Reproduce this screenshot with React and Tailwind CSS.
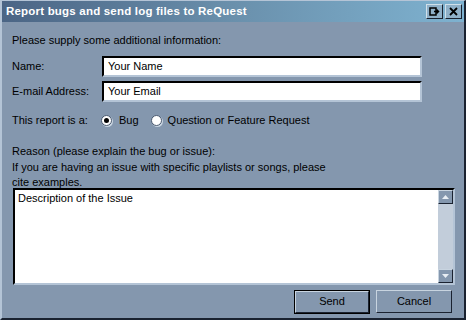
export default function App() {
  const font = { fontFamily: '"Liberation Sans", Arial, sans-serif' }

  return (
    <div className="w-[466px] h-[320px] bg-[#8497ae] flex flex-col border-l-2 border-t border-l-[#b4c4d6] border-t-[#b4c4d6] border-r-2 border-b-2 border-r-[#1a2230] border-b-[#1a2230] overflow-hidden" style={font}>
      {/* Title bar */}
      <div className="h-[21px] shrink-0 flex items-center pl-[4px] pr-[2px] bg-gradient-to-r from-[#4b6585] via-[#6a90ac] to-[#7eb2d0]">
        <span className="text-white font-bold text-[11.5px] tracking-[0.2px] flex-1 leading-none">
          Report bugs and send log files to ReQuest
        </span>
        <button className="w-[17px] h-[15px] mr-[2px] bg-[#8fb0c8] border border-t-[#d0e0ea] border-l-[#d0e0ea] border-r-[#1a2230] border-b-[#1a2230] flex items-center justify-center">
          <svg width="11" height="9" viewBox="0 0 11 9">
            <rect x="1" y="1" width="6" height="7" fill="none" stroke="#000" strokeWidth="1.5" />
            <path d="M5 4.5h4M7.5 2.5l2 2-2 2" fill="none" stroke="#000" strokeWidth="1.5" />
          </svg>
        </button>
        <button className="w-[17px] h-[15px] bg-[#8fb0c8] border border-t-[#d0e0ea] border-l-[#d0e0ea] border-r-[#1a2230] border-b-[#1a2230] flex items-center justify-center">
          <svg width="9" height="9" viewBox="0 0 9 9">
            <path d="M1 1l7 7M8 1l-7 7" stroke="#000" strokeWidth="1.8" />
          </svg>
        </button>
      </div>

      {/* Body */}
      <div className="flex-1 flex flex-col pl-[10px] pr-[8px] pt-[11px] text-[11px] text-black leading-[15px]">
        <p>Please supply some additional information:</p>

        <div className="flex items-center mt-[8px]">
          <span className="w-[90px]">Name:</span>
          <div className="w-[320px] h-[21px] bg-white border-2 border-t-black border-l-black border-r-[#b4c4d6] border-b-[#b4c4d6] flex items-center px-[4px]">
            Your Name
          </div>
        </div>

        <div className="flex items-center mt-[4px]">
          <span className="w-[90px]">E-mail Address:</span>
          <div className="w-[320px] h-[21px] bg-white border-2 border-t-black border-l-black border-r-[#b4c4d6] border-b-[#b4c4d6] flex items-center px-[4px]">
            Your Email
          </div>
        </div>

        <div className="flex items-center mt-[11px]">
          <span className="w-[89px]">This report is a:</span>
          <span className="w-[11px] h-[11px] rounded-full bg-white border border-[#4a5a70] shadow-[1px_1px_0_#c8d4e0] flex items-center justify-center">
            <span className="w-[5px] h-[5px] rounded-full bg-black" />
          </span>
          <span className="ml-[7px]">Bug</span>
          <span className="ml-[12px] w-[11px] h-[11px] rounded-full bg-white border border-[#4a5a70] shadow-[1px_1px_0_#c8d4e0]" />
          <span className="ml-[6px]">Question or Feature Request</span>
        </div>

        <div className="mt-[16px] leading-[15.5px]">
          <p>Reason (please explain the bug or issue):</p>
          <p>If you are having an issue with specific playlists or songs, please</p>
          <p>cite examples.</p>
        </div>

        <div className="-mt-[3px] ml-[1px] w-[442px] h-[97px] shrink-0 bg-white border-2 border-t-black border-l-black border-r-[#b4c4d6] border-b-[#b4c4d6] flex">
          <div className="flex-1 px-[3px] pt-[1px]">Description of the Issue</div>
          <div className="w-[15px] bg-[#c2cdda] flex flex-col justify-between">
            <div className="h-[14px] bg-[#8497ae] border border-t-[#c8d4e0] border-l-[#c8d4e0] border-r-[#1a2230] border-b-[#1a2230] flex items-center justify-center">
              <svg width="7" height="4" viewBox="0 0 7 4"><path d="M3.5 0L7 4H0z" fill="#e8eef4" /></svg>
            </div>
            <div className="h-[14px] bg-[#8497ae] border border-t-[#c8d4e0] border-l-[#c8d4e0] border-r-[#1a2230] border-b-[#1a2230] flex items-center justify-center">
              <svg width="7" height="4" viewBox="0 0 7 4"><path d="M0 0h7L3.5 4z" fill="#e8eef4" /></svg>
            </div>
          </div>
        </div>

        <div className="flex justify-end gap-[6px] mt-[5px] pr-[4px]">
          <button className="w-[76px] h-[24px] border border-black">
            <div className="w-full h-full border border-t-[#c8d4e0] border-l-[#c8d4e0] border-r-[#1a2230] border-b-[#1a2230] flex items-center justify-center">
              Send
            </div>
          </button>
          <button className="w-[76px] h-[23px] border border-t-[#c8d4e0] border-l-[#c8d4e0] border-r-[#1a2230] border-b-[#1a2230] flex items-center justify-center">
            Cancel
          </button>
        </div>
      </div>
    </div>
  )
}
